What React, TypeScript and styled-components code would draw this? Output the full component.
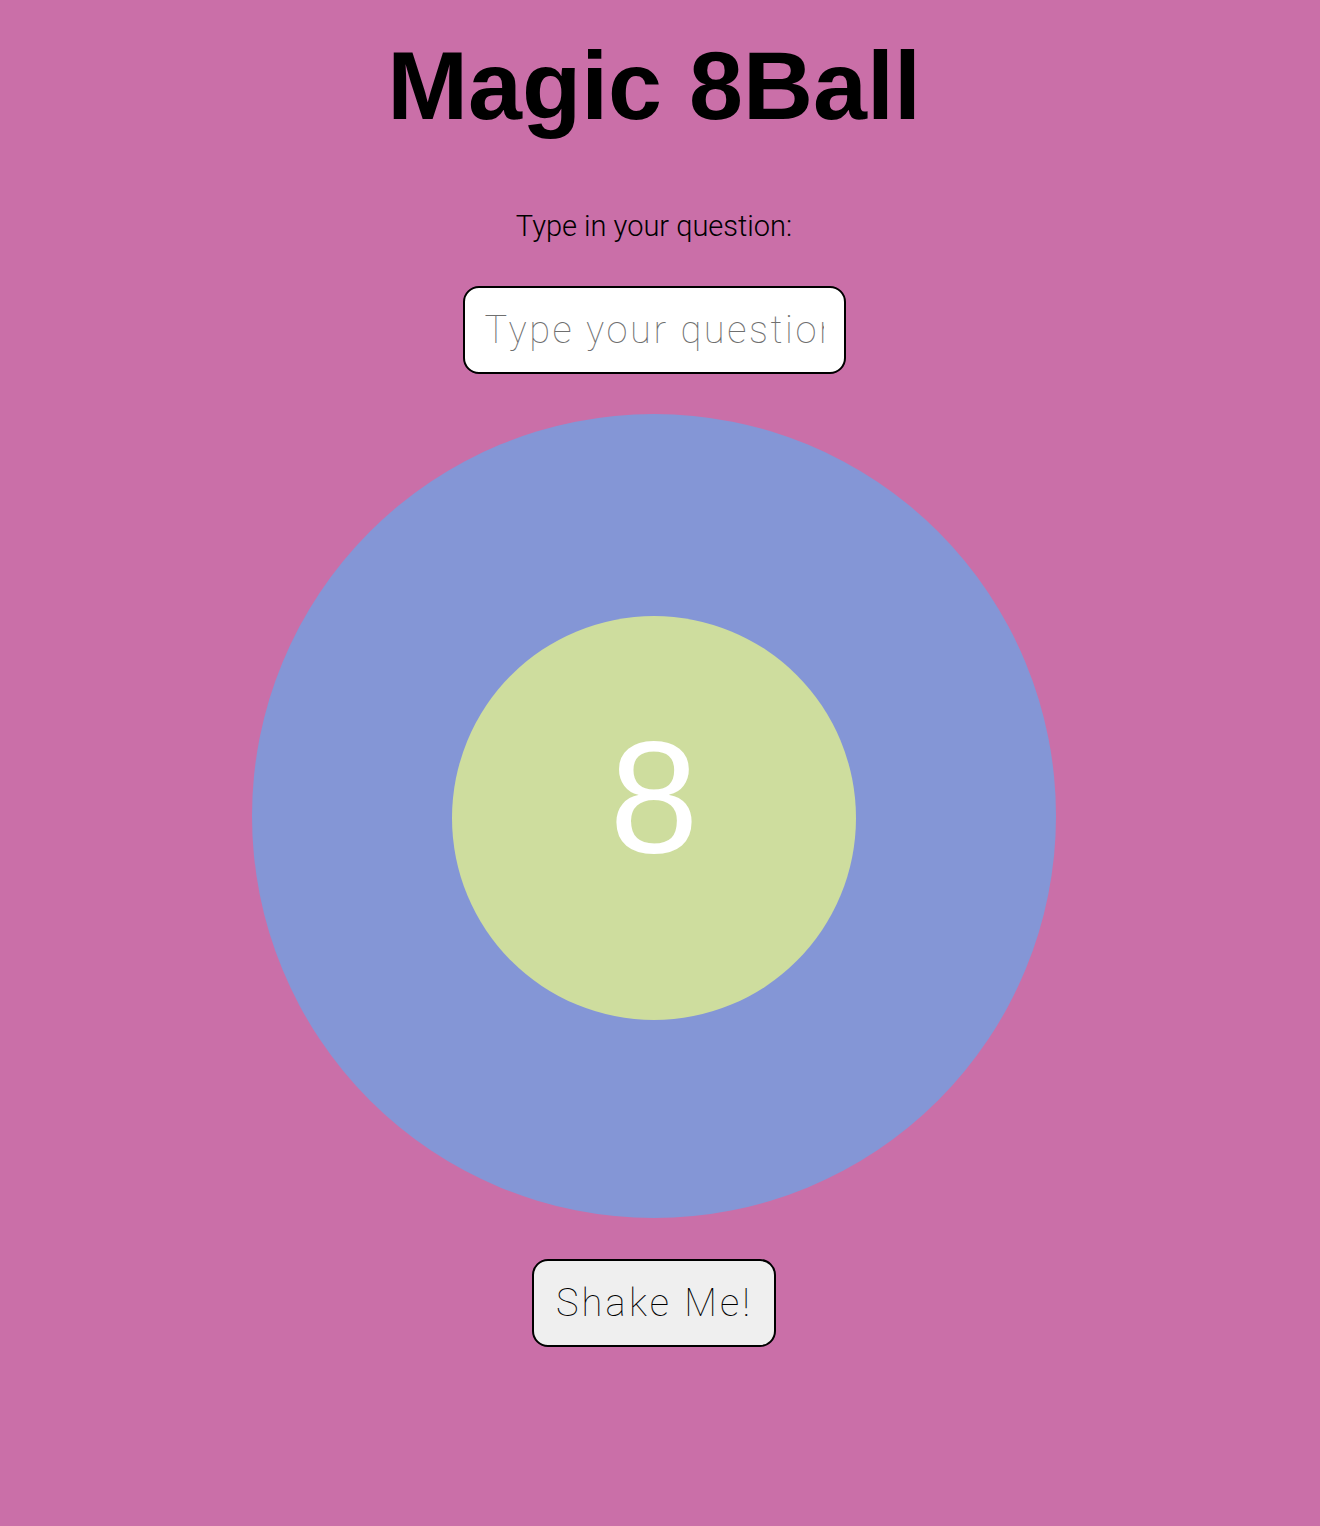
import React from "react";
import styled, { createGlobalStyle } from "styled-components";

const Global = createGlobalStyle`
  html, body {
    margin: 0;
    padding: 0;
    background: #ca6fa8;
  }
  body {
    font-family: "Liberation Sans", Arial, sans-serif;
  }
`;

const Page = styled.main`
  width: 1308px;
  min-height: 1526px;
  box-sizing: border-box;
  padding-top: 38px;
  display: flex;
  flex-direction: column;
  align-items: center;
`;

const Title = styled.h1`
  margin: 0;
  font-family: "Liberation Sans", Arial, sans-serif;
  font-weight: 700;
  font-size: 97px;
  line-height: 96px;
  color: #000;
`;

const Label = styled.label`
  margin-top: 74px;
  font-family: "Roboto", "Liberation Sans", sans-serif;
  font-weight: 300;
  font-size: 29px;
  line-height: 36px;
  letter-spacing: 0;
  color: #000;
`;

const QuestionInput = styled.input`
  margin-top: 42px;
  width: 383px;
  height: 88px;
  box-sizing: border-box;
  border: 2px solid #000;
  border-radius: 16px;
  background: #fff;
  padding: 0 20px;
  font-family: "Roboto", "Liberation Sans", sans-serif;
  font-weight: 100;
  font-size: 38px;
  letter-spacing: 2.6px;
  color: #000;
  outline: none;
  &::placeholder {
    color: #6f6f6f;
  }
`;

const Ball = styled.div`
  margin-top: 40px;
  width: 804px;
  height: 804px;
  border-radius: 50%;
  background: #8496d6;
  display: flex;
  align-items: center;
  justify-content: center;
`;

const Window = styled.div`
  width: 404px;
  height: 404px;
  margin-top: 4px;
  border-radius: 50%;
  background: #cedd9e;
  display: flex;
  align-items: center;
  justify-content: center;
`;

const Eight = styled.span`
  font-family: "Liberation Sans", Arial, sans-serif;
  font-weight: 400;
  font-size: 160px;
  line-height: 1;
  color: #fff;
  margin-bottom: 42px;
`;

const ShakeButton = styled.button`
  margin-top: 41px;
  width: 244px;
  height: 88px;
  box-sizing: border-box;
  border: 2px solid #000;
  border-radius: 16px;
  background: #efefef;
  font-family: "Roboto", "Liberation Sans", sans-serif;
  font-weight: 100;
  font-size: 38px;
  letter-spacing: 3.2px;
  color: #000;
  padding: 0 0 0 1px;
  cursor: pointer;
`;

export default function App() {
  return (
    <>
      <Global />
      <Page>
        <Title>Magic 8Ball</Title>
        <Label htmlFor="q">Type in your question:</Label>
        <QuestionInput id="q" type="text" placeholder="Type your question here" />
        <Ball>
          <Window>
            <Eight>8</Eight>
          </Window>
        </Ball>
        <ShakeButton>Shake Me!</ShakeButton>
      </Page>
    </>
  );
}
